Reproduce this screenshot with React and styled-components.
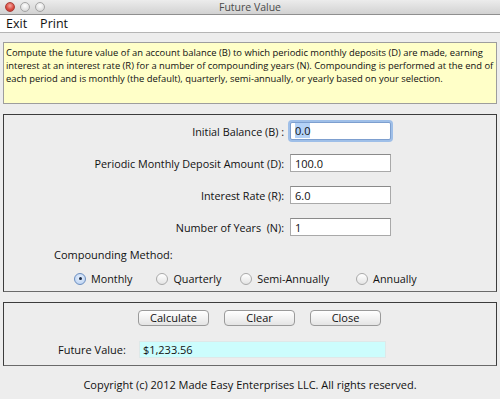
import React, { useState } from "react";
import styled, { createGlobalStyle } from "styled-components";

const GlobalStyle = createGlobalStyle`
  html, body {
    margin: 0;
    padding: 0;
    background: #ededed;
  }
  body {
    font-family: "Open Sans", "DejaVu Sans", sans-serif;
    color: #111;
  }
`;

const Window = styled.div`
  width: 500px;
  height: 399px;
  display: flex;
  flex-direction: column;
  background: #ededed;
  overflow: hidden;
`;

const TitleBar = styled.div`
  position: relative;
  height: 14px;
  flex: none;
  display: flex;
  align-items: center;
  justify-content: center;
  background: linear-gradient(#ececec, #d2d2d2);
  border-bottom: 1px solid #8f8f8f;
  font-size: 10.5px;
  color: #4a4a4a;
`;

const Lights = styled.div`
  position: absolute;
  left: 5px;
  top: 2px;
  display: flex;
  gap: 5px;
`;

const Light = styled.span`
  width: 10px;
  height: 10px;
  border-radius: 50%;
  box-sizing: border-box;
  border: 1px solid ${(p) => (p.$red ? "#a8403a" : "#a5a5a5")};
  background: ${(p) =>
    p.$red
      ? "radial-gradient(circle at 50% 35%, #f6a9a2, #d8473c 60%, #b8352c)"
      : "radial-gradient(circle at 50% 35%, #ffffff, #e2e2e2 60%, #c8c8c8)"};
`;

const MenuBar = styled.div`
  height: 17px;
  flex: none;
  display: flex;
  align-items: center;
  gap: 13px;
  padding-left: 6px;
  background: #fff;
  border-bottom: 1px solid #b5b5b5;
  font-size: 12.5px;
  color: #111;
`;

const Content = styled.div`
  display: flex;
  flex-direction: column;
  padding: 9px 3px 0;
`;

const Note = styled.div`
  height: 54px;
  padding: 3px 2px;
  background: #ffffc8;
  border: 1px solid #9d9d9d;
  font-size: 9.4px;
  line-height: 13px;
  color: #111;
`;

const Panel = styled.div`
  margin-top: 10px;
  height: ${(p) => p.$h}px;
  box-sizing: border-box;
  border: 1px solid #3c3c3c;
  border-bottom-color: #6a6a6a;
  display: flex;
  flex-direction: column;
`;

const FormGrid = styled.div`
  display: grid;
  grid-template-columns: 280px 101px;
  column-gap: 6px;
  row-gap: 14px;
  padding-top: 7px;
  align-items: center;
`;

const Label = styled.label`
  text-align: right;
  font-size: 10.8px;
  white-space: pre;
`;

const Field = styled.input`
  box-sizing: border-box;
  width: 101px;
  height: 18px;
  padding: 0 4px;
  margin: 0;
  border: 1px solid ${(p) => (p.$focus ? "#7d9fcf" : "#a9a9a9")};
  border-top-color: ${(p) => (p.$focus ? "#7d9fcf" : "#8a8a8a")};
  box-shadow: ${(p) => (p.$focus ? "0 0 0 2px #9fbfe8" : "none")};
  border-radius: ${(p) => (p.$focus ? "2px" : "0")};
  font-family: "Open Sans", "DejaVu Sans", sans-serif;
  font-size: 11px;
  line-height: 16px;
  color: #111;
  background: #fff;
  outline: none;
`;

const Selected = styled.span`
  background: #b4d2f7;
`;

const MethodLabel = styled.div`
  margin: 11px 0 0 50px;
  font-size: 11px;
`;

const RadioRow = styled.div`
  display: flex;
  align-items: center;
  margin: 9px 0 0 70px;
`;

const RadioItem = styled.label`
  display: flex;
  align-items: center;
  gap: 5px;
  margin-right: ${(p) => p.$gap}px;
  font-size: 10.8px;
`;

const RadioDot = styled.span`
  position: relative;
  width: 12px;
  height: 12px;
  box-sizing: border-box;
  border-radius: 50%;
  border: 1px solid ${(p) => (p.$on ? "#6c8fc0" : "#a9a9a9")};
  background: ${(p) =>
    p.$on
      ? "radial-gradient(circle at 50% 40%, #e6f0fd, #b4cdf0)"
      : "linear-gradient(#ffffff, #e4e4e4)"};
  &::after {
    content: "";
    display: ${(p) => (p.$on ? "block" : "none")};
    position: absolute;
    left: 3.5px;
    top: 3.5px;
    width: 3px;
    height: 3px;
    border-radius: 50%;
    background: #1c2a44;
  }
`;

const ButtonRow = styled.div`
  display: flex;
  gap: 15px;
  padding: 7px 0 0 134px;
`;

const Button = styled.button`
  box-sizing: border-box;
  width: 71px;
  height: 16px;
  padding: 0;
  border: 1px solid #9a9a9a;
  border-radius: 4px;
  background: linear-gradient(#ffffff, #f2f2f2 50%, #e4e4e4);
  font-family: "Open Sans", "DejaVu Sans", sans-serif;
  font-size: 11px;
  line-height: 14px;
  color: #111;
`;

const ResultRow = styled.div`
  display: flex;
  align-items: center;
  gap: 13px;
  padding: 15px 0 0 54px;
`;

const ResultLabel = styled.span`
  font-size: 11px;
`;

const ResultBox = styled.div`
  box-sizing: border-box;
  width: 247px;
  height: 17px;
  padding-left: 3px;
  background: #ccfdfd;
  border: 1px solid #dfe8e8;
  font-size: 11px;
  line-height: 15px;
`;

const Footer = styled.div`
  margin-top: 11px;
  text-align: center;
  font-size: 11px;
`;

const methods = [
  { name: "Monthly", gap: 24 },
  { name: "Quarterly", gap: 19 },
  { name: "Semi-Annually", gap: 27 },
  { name: "Annually", gap: 0 },
];

export default function App() {
  const [method, setMethod] = useState("Monthly");

  return (
    <Window>
      <GlobalStyle />
      <TitleBar>
        <Lights>
          <Light $red />
          <Light />
          <Light />
        </Lights>
        Future Value
      </TitleBar>
      <MenuBar>
        <span>Exit</span>
        <span>Print</span>
      </MenuBar>
      <Content>
        <Note>
          Compute the future value of an account balance (B) to which periodic monthly deposits (D) are made, earning
          interest at an interest rate (R) for a number of compounding years (N). Compounding is performed at the end of
          each period and is monthly (the default), quarterly, semi-annually, or yearly based on your selection.
        </Note>
        <Panel $h={178}>
          <FormGrid>
            <Label>Initial Balance (B) :</Label>
            <Field as="div" $focus>
              <Selected>0.0</Selected>
            </Field>
            <Label>Periodic Monthly Deposit Amount (D):</Label>
            <Field defaultValue="100.0" />
            <Label>Interest Rate (R):</Label>
            <Field defaultValue="6.0" />
            <Label>Number of Years  (N):</Label>
            <Field defaultValue="1" />
          </FormGrid>
          <MethodLabel>Compounding Method:</MethodLabel>
          <RadioRow>
            {methods.map((m) => (
              <RadioItem key={m.name} $gap={m.gap} onClick={() => setMethod(m.name)}>
                <RadioDot $on={method === m.name} />
                {m.name}
              </RadioItem>
            ))}
          </RadioRow>
        </Panel>
        <Panel $h={64}>
          <ButtonRow>
            <Button>Calculate</Button>
            <Button>Clear</Button>
            <Button>Close</Button>
          </ButtonRow>
          <ResultRow>
            <ResultLabel>Future Value:</ResultLabel>
            <ResultBox>$1,233.56</ResultBox>
          </ResultRow>
        </Panel>
        <Footer>Copyright (c) 2012 Made Easy Enterprises LLC. All rights reserved.</Footer>
      </Content>
    </Window>
  );
}
